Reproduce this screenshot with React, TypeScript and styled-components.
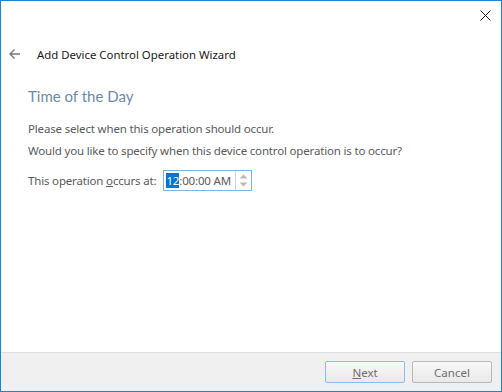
import styled, { createGlobalStyle } from 'styled-components';

const GlobalStyle = createGlobalStyle`
  html, body {
    margin: 0;
    padding: 0;
    background: #ffffff;
  }
  * {
    box-sizing: border-box;
  }
`;

const Window = styled.div`
  width: 502px;
  height: 392px;
  border: 1px solid #1883d7;
  background: #ffffff;
  display: flex;
  flex-direction: column;
  font-family: "Noto Sans", "Open Sans", sans-serif;
  font-size: 11.5px;
  letter-spacing: -0.17px;
  color: #5a5a5a;
`;

const TopBar = styled.div`
  height: 28px;
  display: flex;
  justify-content: flex-end;
  align-items: center;
  padding-right: 10px;
`;

const CloseButton = styled.button`
  width: 12px;
  height: 12px;
  padding: 0;
  border: none;
  background: transparent;
  display: flex;
  align-items: center;
  justify-content: center;
`;

const TitleRow = styled.div`
  height: 22px;
  margin-top: 14px;
  display: flex;
  align-items: center;
  padding-left: 7px;
  column-gap: 16px;
`;

const Title = styled.span`
  font-size: 11.4px;
  letter-spacing: 0;
  color: #1a1a1a;
`;

const Content = styled.div`
  flex: 1;
  padding: 0 26px;
  display: flex;
  flex-direction: column;
`;

const Heading = styled.h2`
  margin: 21px 0 15px 1px;
  font-family: Lato, "Noto Sans", sans-serif;
  font-size: 15px;
  letter-spacing: 0;
  font-weight: normal;
  color: #6b8aa5;
  line-height: 20px;
`;

const Paragraph = styled.p`
  margin: 0 0 6px 1px;
  line-height: 16px;
`;

const FieldRow = styled.div`
  display: flex;
  align-items: center;
  column-gap: 7px;
  margin: 5px 0 0 1px;
`;

const TimePicker = styled.div`
  width: 89px;
  height: 21px;
  border: 1px solid #7eb4ea;
  display: flex;
  align-items: stretch;
  background: #ffffff;
`;

const TimeText = styled.div`
  flex: 1;
  display: flex;
  align-items: center;
  padding-left: 2px;
  color: #5a5a5a;
`;

const Selected = styled.span`
  background: #0078d7;
  color: #ffffff;
  line-height: 15px;
`;

const Spinner = styled.div`
  width: 16px;
  border-left: 1px solid #d6d6d6;
  display: flex;
  flex-direction: column;
  align-items: center;
  justify-content: center;
  row-gap: 3px;
`;

const Footer = styled.div`
  height: 39px;
  background: #f0f0f0;
  border-top: 1px solid #dfdfdf;
  display: flex;
  justify-content: flex-end;
  align-items: center;
  column-gap: 7px;
  padding-right: 9px;
`;

const Button = styled.button<{ $primary?: boolean }>`
  width: 80px;
  height: 22px;
  border: 1px solid ${p => (p.$primary ? '#8cbcec' : '#b8b8b8')};
  border-radius: 2px;
  background: linear-gradient(#f8f8f8, #e9e9e9);
  font-family: "Noto Sans", "Open Sans", sans-serif;
  font-size: 11.5px;
  color: #6e6e6e;
  padding: 0;
`;

function BackArrow() {
  return (
    <svg width="13" height="12" viewBox="0 0 13 12">
      <path d="M12 6H2M6.5 1.5L2 6l4.5 4.5" fill="none" stroke="#7a7a7a" strokeWidth="1.4" />
    </svg>
  );
}

function CloseIcon() {
  return (
    <svg width="11" height="11" viewBox="0 0 11 11">
      <path d="M0.5 0.5L10.5 10.5M10.5 0.5L0.5 10.5" stroke="#1a1a1a" strokeWidth="1" />
    </svg>
  );
}

function SpinArrow(props: { down?: boolean }) {
  return (
    <svg width="9" height="5" viewBox="0 0 9 5">
      <path d={props.down ? 'M0.5 0.5h8L4.5 4.5z' : 'M0.5 4.5h8L4.5 0.5z'} fill="#b9b9b9" />
    </svg>
  );
}

export default function App() {
  return (
    <>
      <GlobalStyle />
      <Window>
        <TopBar>
          <CloseButton>
            <CloseIcon />
          </CloseButton>
        </TopBar>
        <TitleRow>
          <BackArrow />
          <Title>Add Device Control Operation Wizard</Title>
        </TitleRow>
        <Content>
          <Heading>Time of the Day</Heading>
          <Paragraph>Please select when this operation should occur.</Paragraph>
          <Paragraph>Would you like to specify when this device control operation is to occur?</Paragraph>
          <FieldRow>
            <span>This operation <u>o</u>ccurs at:</span>
            <TimePicker>
              <TimeText>
                <Selected>12</Selected>:00:00 AM
              </TimeText>
              <Spinner>
                <SpinArrow />
                <SpinArrow down />
              </Spinner>
            </TimePicker>
          </FieldRow>
        </Content>
        <Footer>
          <Button $primary><u>N</u>ext</Button>
          <Button>Cancel</Button>
        </Footer>
      </Window>
    </>
  );
}
